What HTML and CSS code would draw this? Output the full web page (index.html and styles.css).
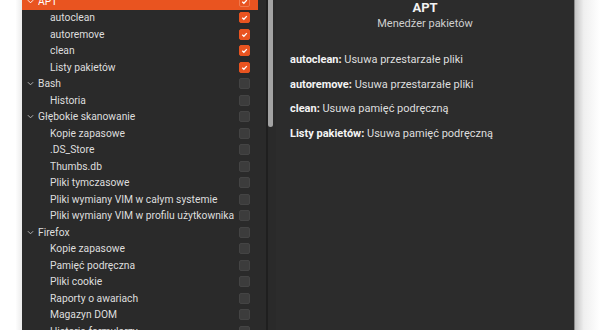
FILE: index.html
```html
<!DOCTYPE html>
<html lang="pl">
<head>
    <meta charset="UTF-8">
    <title>BleachBit</title>
    <link rel="stylesheet" href="styles.css">
</head>
<body>
    <div class="edge-left"></div>

    <div class="window">
        <div class="tree">
            <div class="rows">
                <div class="row parent selected">
                    <svg class="chev" viewBox="0 0 8 5"><polyline points="1,1 4,4 7,1"/></svg>
                    <span class="label">APT</span>
                    <span class="check on"><svg viewBox="0 0 10 10"><polyline points="2.5,5.2 4.3,7 7.6,3.4"/></svg></span>
                </div>
                <div class="row child"><span class="label">autoclean</span><span class="check on"><svg viewBox="0 0 10 10"><polyline points="2.5,5.2 4.3,7 7.6,3.4"/></svg></span></div>
                <div class="row child"><span class="label">autoremove</span><span class="check on"><svg viewBox="0 0 10 10"><polyline points="2.5,5.2 4.3,7 7.6,3.4"/></svg></span></div>
                <div class="row child"><span class="label">clean</span><span class="check on"><svg viewBox="0 0 10 10"><polyline points="2.5,5.2 4.3,7 7.6,3.4"/></svg></span></div>
                <div class="row child"><span class="label">Listy pakietów</span><span class="check on"><svg viewBox="0 0 10 10"><polyline points="2.5,5.2 4.3,7 7.6,3.4"/></svg></span></div>

                <div class="row parent">
                    <svg class="chev" viewBox="0 0 8 5"><polyline points="1,1 4,4 7,1"/></svg>
                    <span class="label">Bash</span><span class="check"></span>
                </div>
                <div class="row child"><span class="label">Historia</span><span class="check"></span></div>

                <div class="row parent">
                    <svg class="chev" viewBox="0 0 8 5"><polyline points="1,1 4,4 7,1"/></svg>
                    <span class="label">Głębokie skanowanie</span><span class="check"></span>
                </div>
                <div class="row child"><span class="label">Kopie zapasowe</span><span class="check"></span></div>
                <div class="row child"><span class="label">.DS_Store</span><span class="check"></span></div>
                <div class="row child"><span class="label">Thumbs.db</span><span class="check"></span></div>
                <div class="row child"><span class="label">Pliki tymczasowe</span><span class="check"></span></div>
                <div class="row child"><span class="label">Pliki wymiany VIM w całym systemie</span><span class="check"></span></div>
                <div class="row child"><span class="label">Pliki wymiany VIM w profilu użytkownika</span><span class="check"></span></div>

                <div class="row parent">
                    <svg class="chev" viewBox="0 0 8 5"><polyline points="1,1 4,4 7,1"/></svg>
                    <span class="label">Firefox</span><span class="check"></span>
                </div>
                <div class="row child"><span class="label">Kopie zapasowe</span><span class="check"></span></div>
                <div class="row child"><span class="label">Pamięć podręczna</span><span class="check"></span></div>
                <div class="row child"><span class="label">Pliki cookie</span><span class="check"></span></div>
                <div class="row child"><span class="label">Raporty o awariach</span><span class="check"></span></div>
                <div class="row child"><span class="label">Magazyn DOM</span><span class="check"></span></div>
                <div class="row child"><span class="label">Historia formularzy</span><span class="check"></span></div>
            </div>
        </div>

        <div class="scrollbar">
            <div class="trough"></div>
            <div class="thumb"></div>
        </div>

        <div class="details">
            <div class="title">APT</div>
            <div class="subtitle">Menedżer pakietów</div>

            <ul class="options">
                <li><b>autoclean:</b> Usuwa przestarzałe pliki</li>
                <li><b>autoremove:</b> Usuwa przestarzałe pliki</li>
                <li><b>clean:</b> Usuwa pamięć podręczną</li>
                <li><b>Listy pakietów:</b> Usuwa pamięć podręczną</li>
            </ul>
        </div>
    </div>

    <div class="edge-right"></div>
</body>
</html>
```

FILE: styles.css
```css
body {
    margin: 0;
    width: 600px;
    height: 330px;
    overflow: hidden;
    display: flex;
    background-color: #ffffff;
    font-family: Roboto, "Noto Sans", sans-serif;
    font-size: 11px;
    color: #dedede;
}

.edge-left {
    width: 22px;
    flex-shrink: 0;
    background: linear-gradient(to right, #ffffff 70%, #ececec);
}
.edge-right {
    width: 25px;
    flex-shrink: 0;
    border-left: 1px solid #8a8a8a;
    background: linear-gradient(to right, #c4c4c4, #efefef 35%, #ffffff);
}

.window {
    flex: 1;
    display: flex;
    background-color: #2c2c2c;
}

/* tree on the left */
.tree {
    width: 236px;
    flex-shrink: 0;
    background-color: #2a2a2a;
    overflow: hidden;
    font-size: 10.3px;
}
.rows {
    margin-top: -7px; /* list is scrolled a little */
}
.row {
    height: 16.5px;
    display: flex;
    align-items: center;
    white-space: nowrap;
}
.row.parent {
    padding-left: 5px;
}
.row.child {
    padding-left: 28px;
}
.row.selected {
    background-color: #e95420;
    color: #ffffff;
}
.chev {
    width: 7px;
    height: 5px;
    margin-right: 4px;
    fill: none;
    stroke: #b8b8b8;
    stroke-width: 1.1;
}
.row.selected .chev {
    stroke: #ffffff;
}
.label {
    flex: 1;
    min-width: 0;
    overflow: hidden;
}
.check {
    width: 11px;
    height: 11px;
    margin-right: 8px;
    border-radius: 2px;
    box-sizing: border-box;
    background-color: #3c3c3c;
    border: 1px solid #444444;
    flex-shrink: 0;
}
.check.on {
    background-color: #e95420;
    border-color: #e95420;
}
.row.selected .check.on {
    border-color: #f07a4e;
}
.check svg {
    display: block;
    width: 9px;
    height: 9px;
    fill: none;
    stroke: #ffffff;
    stroke-width: 1.4;
}

/* scrollbar between panes */
.scrollbar {
    width: 18px;
    flex-shrink: 0;
    display: flex;
    align-items: flex-start;
    padding-left: 8px;
    box-sizing: border-box;
    background-color: #2a2a2a;
}
.trough {
    width: 2px;
    height: 330px;
    background-color: #1f1f1f;
}
.thumb {
    width: 5px;
    height: 131px;
    margin-top: -4px;
    border-radius: 0 0 3px 3px;
    background-color: #a3a3a3;
}

/* description pane */
.details {
    flex: 1;
    padding: 0 14px;
}
.title {
    text-align: center;
    font-size: 13px;
    font-weight: bold;
    color: #f2f2f2;
}
.subtitle {
    margin-top: 2px;
    text-align: center;
    color: #cfcfcf;
}
.options {
    list-style: none;
    margin: 18px 0 0 0;
    padding: 0;
}
.options li {
    height: 24.7px;
    line-height: 24.7px;
}
.options b {
    color: #f4f4f4;
}
```
